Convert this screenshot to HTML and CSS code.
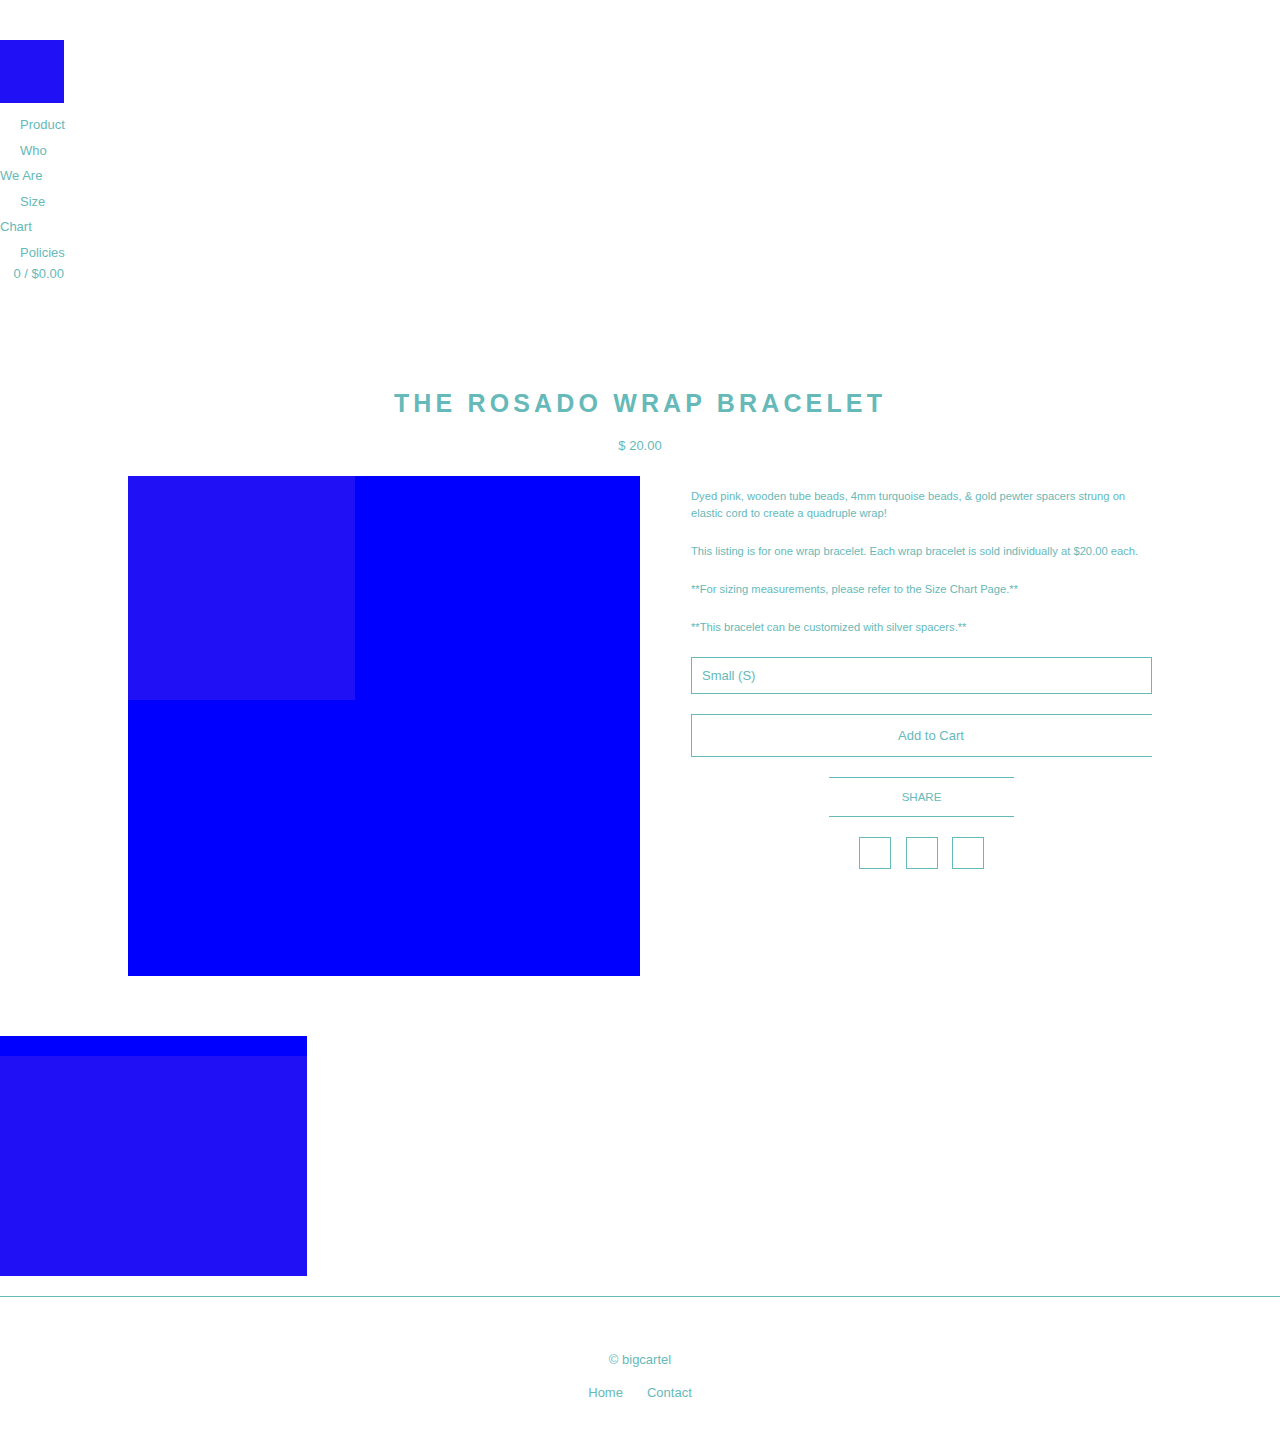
FILE: index.html
```html
<!DOCTYPE html>
<html>
<head>
<meta charset="utf-8">
<link rel="stylesheet" href="styles.css">
</head>
<body>
<header class="header">
  <div class="logo"></div>
  <nav class="nav">
    <a class="nav-link">Product</a>
    <a class="nav-link">Who We Are</a>
    <a class="nav-link">Size Chart</a>
    <a class="nav-link">Policies</a>
  </nav>
  <div class="cart">0 / $0.00</div>
</header>

<main class="product">
  <h1 class="title">THE ROSADO WRAP BRACELET</h1>
  <div class="price">$ 20.00</div>
  <div class="columns">
    <div class="image-col">
      <div class="main-image"><div class="thumb"></div></div>
    </div>
    <div class="info-col">
      <p class="desc">Dyed pink, wooden tube beads, 4mm turquoise beads, &amp; gold pewter spacers strung on elastic cord to create a quadruple wrap!</p>
      <p class="desc">This listing is for one wrap bracelet. Each wrap bracelet is sold individually at $20.00 each.</p>
      <p class="desc">**For sizing measurements, please refer to the Size Chart Page.**</p>
      <p class="desc">**This bracelet can be customized with silver spacers.**</p>
      <div class="select">Small (S)</div>
      <div class="button">Add to Cart</div>
      <div class="share">SHARE</div>
      <div class="icons">
        <span class="icon"></span>
        <span class="icon"></span>
        <span class="icon"></span>
      </div>
    </div>
  </div>
</main>

<section class="related">
  <div class="related-item"><div class="related-inner"></div></div>
</section>

<footer class="footer">
  <div class="copy">© bigcartel</div>
  <div class="footer-links">
    <a class="footer-link">Home</a>
    <a class="footer-link">Contact</a>
  </div>
</footer>
</body>
</html>
```

FILE: styles.css
```css
* { box-sizing: border-box; }
html, body { margin: 0; padding: 0; background: #fff; }
body {
  font-family: "Liberation Sans", Arial, sans-serif;
  color: #66b9b9;
  font-size: 13px;
}
.header {
  padding-top: 40px;
  width: 64px;
}
.logo {
  width: 64px;
  height: 63px;
  background: #1f10f6;
}
.nav {
  margin-top: 9px;
  line-height: 25.6px;
  width: 64px;
}
.nav-link {
  padding-left: 20px;
}
.cart {
  text-align: right;
  line-height: 16px;
}
.product {
  padding-top: 106px;
}
.title {
  margin: 0;
  text-align: center;
  font-size: 25px;
  font-weight: bold;
  letter-spacing: 4.15px;
  line-height: 30px;
}
.price {
  text-align: center;
  line-height: 16px;
  margin-top: 20px;
}
.columns {
  width: 1024px;
  margin: 22px auto 0;
  display: flex;
}
.image-col {
  width: 512px;
}
.main-image {
  width: 512px;
  height: 500px;
  background: #0000ff;
}
.thumb {
  width: 227px;
  height: 224px;
  background: #1f10f6;
}
.info-col {
  width: 512px;
  padding-left: 51px;
  padding-top: 12px;
  overflow: hidden;
}
.desc {
  margin: 0 0 21px;
  font-size: 11.2px;
  line-height: 17px;
}
.select {
  height: 37px;
  border: 1px solid #66b9b9;
  padding-left: 10px;
  line-height: 35px;
  font-size: 13px;
}
.button {
  margin-top: 20px;
  width: 480px;
  height: 43px;
  border: 1px solid #66b9b9;
  text-align: center;
  line-height: 41px;
  font-size: 13px;
}
.share {
  margin: 20px auto 0;
  width: 185px;
  height: 40px;
  border-top: 1px solid #66b9b9;
  border-bottom: 1px solid #66b9b9;
  text-align: center;
  line-height: 38px;
  font-size: 11.5px;
}
.icons {
  display: flex;
  justify-content: center;
  gap: 14.5px;
  margin-top: 20px;
}
.icon {
  width: 32px;
  height: 32px;
  border: 1px solid #66b9b9;
}
.related {
  margin-top: 60px;
}
.related-item {
  width: 307px;
  height: 240px;
  background: #0000ff;
  padding-top: 20px;
}
.related-inner {
  height: 220px;
  background: #1f10f6;
}
.footer {
  margin-top: 20px;
  border-top: 1px solid #66b9b9;
  padding-top: 55px;
  padding-bottom: 40px;
  text-align: center;
}
.copy {
  line-height: 16px;
}
.footer-links {
  margin-top: 17px;
  line-height: 16px;
  display: flex;
  justify-content: center;
  gap: 24px;
}
```
